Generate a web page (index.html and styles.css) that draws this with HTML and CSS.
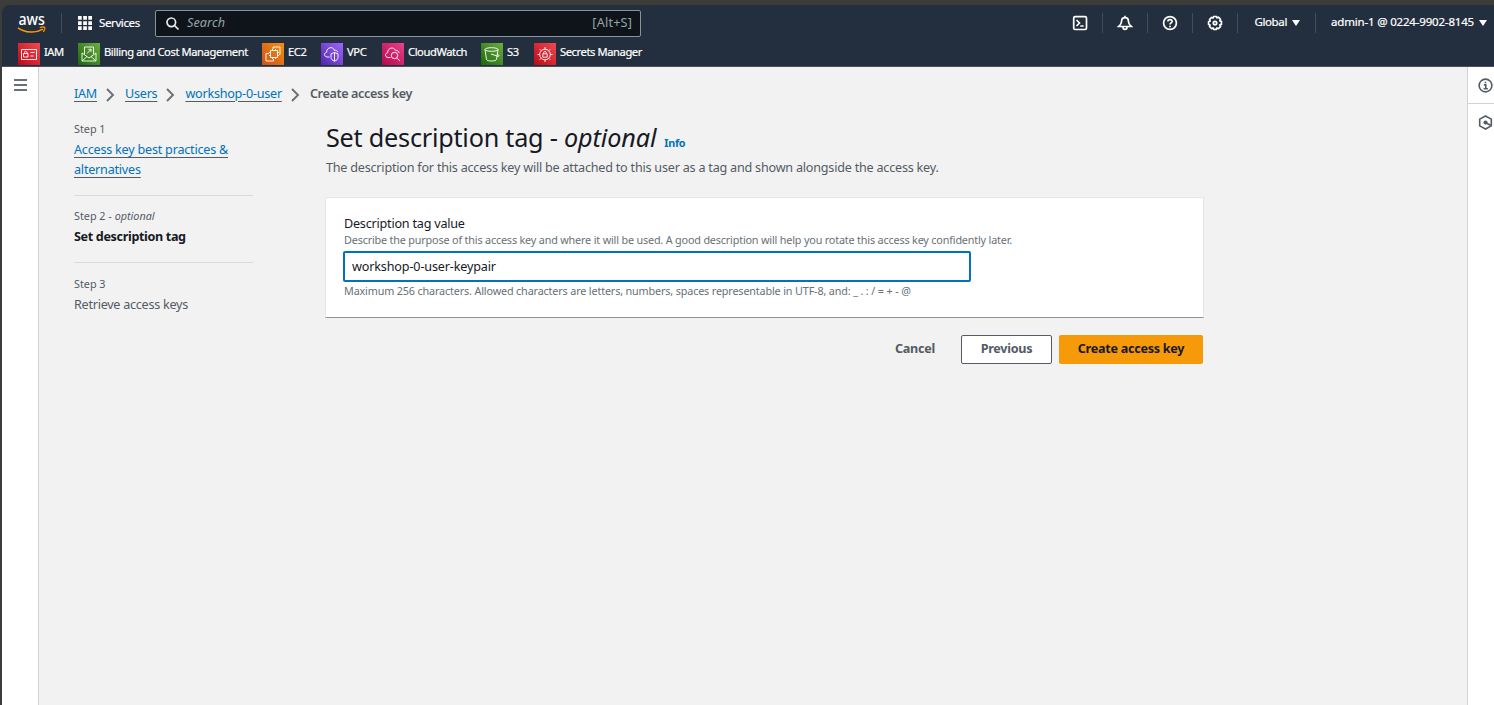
FILE: index.html
```
<!DOCTYPE html>
<html lang="en">
<head>
<meta charset="utf-8">
<title>Create access key | IAM</title>
<link rel="stylesheet" href="styles.css">
</head>
<body>
<div class="window">
  <header class="nav">
    <div class="nav-top">
      <svg class="aws" viewBox="0 -6 30 28" width="30" height="28">
        <text x="1.500" y="12" class="aws-word" textLength="26.500" lengthAdjust="spacingAndGlyphs">aws</text>
        <path d="M1 14.800C8 20 19 20.300 26 16.200" fill="none" stroke="#f90" stroke-width="1.500"/>
        <path d="M22.800 14.600c2-.7 4.600-.7 5 0s-.4 3-1.700 4.300" fill="none" stroke="#f90" stroke-width="1.200"/>
      </svg>
      <i class="sep sep-logo"></i>
      <svg class="grid" viewBox="0 0 14 14" width="14" height="14" fill="#fff"><path d="M0 0h3.700v3.700H0zM5.200 0h3.700v3.700H5.200zM10.300 0H14v3.700h-3.700zM0 5.200h3.700v3.700H0zM5.200 5.200h3.700v3.700H5.200zM10.300 5.200H14v3.700h-3.700zM0 10.300h3.700V14H0zM5.200 10.300h3.700V14H5.200zM10.300 10.300H14V14h-3.700z"/></svg>
      <span class="services">Services</span>
      <div class="search">
        <svg viewBox="0 0 14 14" width="14" height="14" fill="none" stroke="#e9ebed" stroke-width="1.700"><circle cx="5.300" cy="5.300" r="4.300"/><path d="M8.500 8.500l4 4"/></svg>
        <span class="placeholder">Search</span><span class="shortcut">[Alt+S]</span>
      </div>
      <div class="tools">
        <svg class="tool" viewBox="0 0 16 16" width="16" height="16"><rect x="1.700" y="1.700" width="12.800" height="12.800" rx="1.500"/><path d="M4.500 5l3 3-3 3M8.300 11h3.300"/></svg>
        <i class="sep"></i>
        <svg class="tool" viewBox="0 0 16 16" width="16" height="16"><path d="M8 .8v2M8 2.600c-2.200 0-3.400 1.600-3.400 3.600 0 2.200-.7 3.400-2.900 5.300h12.600c-2.200-1.900-2.900-3.100-2.900-5.300 0-2-1.200-3.600-3.400-3.600zM6 12c0 3.200 4 3.200 4 0"/></svg>
        <i class="sep"></i>
        <svg class="tool" viewBox="0 0 16 16" width="16" height="16"><circle cx="8" cy="8" r="6.400"/><path d="M5.900 6.600c0-2.700 4.200-2.600 4.200-.2C10.100 7.900 8 7.800 8 9.500M8 10.700v1.500"/></svg>
        <i class="sep"></i>
        <svg class="tool" viewBox="0 0 16 16" width="16" height="16"><path d="M6.700 1.500h2.600l.6 1.300 1.600-.5 1.900 1.900-.5 1.500 1.500.7v3l-1.500.6.6 1.600-1.900 1.900-1.600-.5-.7 1.400H6.700L6 13l-1.500.5-1.900-1.900.5-1.500-1.500-.7V6.700L3.100 6l-.5-1.600 1.900-1.900 1.500.5z"/><circle cx="8" cy="8" r="1.700"/></svg>
        <i class="sep"></i>
        <span class="region">Global</span><i class="caret"></i>
        <i class="sep"></i>
        <span class="account">admin-1 @ 0224-9902-8145</span><i class="caret"></i>
      </div>
    </div>
    <div class="favorites">
      <a class="fav fav-iam"><svg class="red" viewBox="0 0 22 22"><path d="M3.500 6.500h15v10h-15zM5.500 10.500h4.500v3.500H5.500zM6.500 10.500V9.300c0-1.500 2.500-1.500 2.500 0v1.200M12.500 9.500h4M12.500 13h3"/></svg><span>IAM</span></a>
      <a class="fav fav-bill"><svg class="green" viewBox="0 0 22 22"><path d="M4 10v8h14v-8l-7 5zM4 18l5-4.500M18 18l-5-4.500M6.500 11V4h9v7M9 10.500L13 6.500M10.500 6.300H13v2.500"/></svg><span>Billing and Cost Management</span></a>
      <a class="fav fav-ec2"><svg class="orange" viewBox="0 0 22 22"><path d="M8.500 7.500h7v7h-7zM7 10.500H4V18h7.500v-2M11 6V4h7v7.500h-1M10.500 6v1.500M13.500 6v1.500M10.500 14.500V16M13.500 14.500V16M7 9.500h1.500M7 12.500h1.500M15.500 9.500H17M15.500 12.500H17"/></svg><span>EC2</span></a>
      <a class="fav fav-vpc"><svg class="purple" viewBox="0 0 22 22"><path d="M8.500 14H6c-3.500-.5-3-4.500-.3-4.800C5.500 4 12.500 3 13.500 7.500c1.500-.8 3 .2 3 1.700M13.500 9.500l3.500 1.300v3.500c0 2-1.500 3.200-3.500 3.900-2-.7-3.500-1.900-3.500-3.900v-3.500zM13.500 9.500v8.700"/></svg><span>VPC</span></a>
      <a class="fav fav-cw"><svg class="pink" viewBox="0 0 22 22"><path d="M8.500 14.500H6c-3.500-.5-3-4.500-.3-4.800C5.500 4.500 12 3.500 13.500 7.500c2-.5 3.500.7 3.500 2.500"/><circle cx="12.500" cy="12.500" r="3.200"/><path d="M14.800 14.800l3 3"/></svg><span>CloudWatch</span></a>
      <a class="fav fav-s3"><svg class="green" viewBox="0 0 22 22"><ellipse cx="10.500" cy="6.500" rx="6.500" ry="1.800"/><path d="M4 6.500L5.500 16.500c.5 2 9.500 2 10 0L17 6.500M10 11l7 2.300c2 .3 1-1.700-.8-2.300"/></svg><span>S3</span></a>
      <a class="fav"><svg class="red" viewBox="0 0 22 22"><circle cx="11" cy="11.500" r="5.300"/><path d="M8.800 10.800h4.400v3.400H8.800zM9.700 10.800V9.500c0-1.500 2.600-1.500 2.600 0v1.300M11 4v2.200M11 16.800V19M3.500 11.500h2.200M16.300 11.500h2.200M5.700 6.200l1.500 1.500M16.300 6.200l-1.500 1.500M5.700 16.800l1.500-1.500M16.300 16.800l-1.500-1.500"/></svg><span>Secrets Manager</span></a>
    </div>
  </header>
  <div class="shell">
    <aside class="rail-left"><i class="burger"></i></aside>
    <div class="content">
      <nav class="crumbs">
        <a class="link">IAM</a><svg class="chev" viewBox="0 0 9 14"><path d="M1 1l6 6-6 6"/></svg>
        <a class="link">Users</a><svg class="chev" viewBox="0 0 9 14"><path d="M1 1l6 6-6 6"/></svg>
        <a class="link">workshop-0-user</a><svg class="chev" viewBox="0 0 9 14"><path d="M1 1l6 6-6 6"/></svg>
        <span class="current">Create access key</span>
      </nav>
      <div class="columns">
        <ol class="steps">
          <li><small>Step 1</small><div class="step-name"><a class="link wrap">Access key best practices &amp; alternatives</a></div></li>
          <li><small>Step 2 - <em>optional</em></small><div class="step-name active">Set description tag</div></li>
          <li><small>Step 3</small><div class="step-name">Retrieve access keys</div></li>
        </ol>
        <main class="main">
          <h1><span class="title">Set description tag - </span><em>optional</em><a class="info">Info</a></h1>
          <p class="lead">The description for this access key will be attached to this user as a tag and shown alongside the access key.</p>
          <section class="card">
            <label>Description tag value</label>
            <p class="hint">Describe the purpose of this access key and where it will be used. A good description will help you rotate this access key confidently later.</p>
            <div class="input">workshop-0-user-keypair</div>
            <p class="hint constraint">Maximum 256 characters. Allowed characters are letters, numbers, spaces representable in UTF-8, and: _ . : / = + - @</p>
          </section>
          <div class="actions"><span class="btn text">Cancel</span><span class="btn outline">Previous</span><span class="btn primary">Create access key</span></div>
        </main>
      </div>
    </div>
    <aside class="rail-right">
      <div class="rail-item"><svg viewBox="0 0 16 16" width="15" height="15"><circle cx="8" cy="8" r="6.800"/><path d="M6.300 7.300H8.300v4M6 11.500h4.500M8 4v1.700"/></svg></div>
      <div class="rail-item"><svg viewBox="0 0 16 16" width="15" height="15"><path d="M8 1l6.200 3.400v7.200L8 15l-6.200-3.400V4.400z"/><circle cx="8" cy="8" r="1.400" fill="#545b64"/><path d="M8.500 8.500l5 2.500"/></svg></div>
    </aside>
  </div>
</div>
</body>
</html>
```
FILE: styles.css
```
* { box-sizing: border-box; }
body { margin: 0; width: 1494px; height: 705px; overflow: hidden; background: #3c3c3a; font-family: "Noto Sans", "Open Sans", sans-serif; font-size: 12.6px; letter-spacing: -.215px; color: #16191f; }
p, h1, ol { margin: 0; padding: 0; }
i { display: block; }
a { white-space: nowrap; }
.window { display: flex; flex-direction: column; height: 705px; padding: 5px 0 0 2px; }
.nav { height: 62px; background: #232f3e; border-radius: 8px 0 0 0; border-bottom: 1px solid #4b4f59; color: #fff; font-size: 11.5px; flex: none; -webkit-text-stroke: .2px; }
.nav-top { display: flex; align-items: center; height: 36px; padding: 0 7px 0 15px; white-space: nowrap; }
.nav-top > * { flex: none; }
.aws { margin-top: -5px; }
.aws-word { font: 500 15.5px "Noto Sans", sans-serif; letter-spacing: 0; fill: #fff; -webkit-text-stroke: 0; }
.sep { width: 1px; height: 20px; background: #414d5c; }
.sep-logo { margin: 0 16px 0 14px; }
.services { width: 56px; margin: -2px 0 0 7px; letter-spacing: -.38px; }
.search { display: flex; align-items: center; width: 486px; height: 27px; padding: 0 8px 0 10px; background: #0f141a; border: 1px solid #879596; border-radius: 2px; font-size: 12.6px; color: #95a5a6; margin-top: 1px; letter-spacing: 0; -webkit-text-stroke: 0; }
.placeholder { margin: -2px 0 0 7px; font-style: italic; letter-spacing: .1px; }
.shortcut { margin: -2px 0 0 auto; letter-spacing: .2px; }
.tools { display: flex; align-items: center; margin-left: auto; }
.tool { fill: none; stroke: #fff; stroke-width: 1.7; }
.tools .sep { margin: 0 14px; }
.tools .caret + .sep { margin: 0 15px; }
.region, .account { margin-top: -3px; }
.region { letter-spacing: -.36px; margin-left: 2px; }
.account { letter-spacing: -.18px; }
.caret { border: 4px solid transparent; border-top: 6px solid #fff; border-bottom: 0; margin-left: 5px; }
.favorites { display: flex; height: 25px; padding: 2px 0 0 16px; }
.fav { display: flex; gap: 4px; line-height: 17px; font-size: 11.2px; letter-spacing: -.42px; }
.fav svg { width: 22px; height: 22px; fill: none; stroke: #fff; stroke-width: .9; flex: none; }
.red { background: linear-gradient(45deg, #bd0816, #f04a52); }
.green { background: linear-gradient(45deg, #1b660f, #6cae3e); }
.orange { background: linear-gradient(45deg, #c8511b, #f49111); }
.purple { background: linear-gradient(45deg, #4d27a8, #a166ff); }
.pink { background: linear-gradient(45deg, #b0084d, #f0408b); }
.fav-iam { width: 60px; }
.fav-bill { width: 184px; }
.fav-ec2 { width: 59px; }
.fav-vpc { width: 61px; }
.fav-cw { width: 99px; }
.fav-s3 { width: 53px; }
.shell { display: flex; flex: 1; background: #f2f2f2; }
.rail-left { width: 37px; background: #fff; border-right: 1px solid #d0d4d8; padding: 12px 0 0 12px; }
.burger { width: 13px; height: 12px; border-top: 2px solid #687078; border-bottom: 2px solid #687078; background: linear-gradient(#687078, #687078) 0 50% / 100% 2px no-repeat; }
.content { flex: 1; padding: 16px 0 0 35px; }
.crumbs { display: flex; align-items: center; height: 20px; white-space: nowrap; }
.link { color: #0073bb; text-decoration: underline #545b64 1px; text-underline-offset: 3px; }
.crumbs .link { letter-spacing: -.24px; }
.chev { width: 9px; height: 14px; margin: 3px 10px 0 9px; fill: none; stroke: #687078; stroke-width: 1.9; }
.current { color: #545b64; font-weight: 600; letter-spacing: -.36px; }
.columns { display: flex; padding-top: 17px; }
.steps { list-style: none; width: 179px; color: #545b64; }
.steps li { height: 67px; border-bottom: 1px solid #d5dbdb; }
.steps li:first-child { height: 76px; }
.steps li + li { padding-top: 11px; }
.steps li:last-child { border: 0; padding-top: 12px; }
.steps li:last-child .step-name { letter-spacing: -.26px; }
.steps small { display: block; font-size: 10.8px; line-height: 18px; letter-spacing: 0; }
.step-name { line-height: 20px; padding-top: 2px; white-space: nowrap; }
.wrap { white-space: normal; }
.active { font-weight: 700; letter-spacing: -.35px; color: #16191f; }
.main { width: 877px; margin-left: 73px; }
h1 { font-size: 25.2px; font-weight: 400; line-height: 36px; margin-top: -1px; letter-spacing: -.1px; white-space: pre; }
.title { letter-spacing: -.22px; }
.info { font-size: 10.8px; font-weight: 700; letter-spacing: -.3px; color: #0073bb; margin-left: 8px; }
.lead { line-height: 20px; margin-top: -3px; color: #545b64; white-space: nowrap; }
.card { width: 879px; height: 121px; margin: 19px 0 0 -1px; padding: 17px 18px 16px; background: #fff; border: 1px solid #e4e6e7; border-bottom-color: #8d9294; white-space: nowrap; }
.card label { display: block; line-height: 18px; }
.hint { font-size: 10.8px; line-height: 16px; margin-top: -1px; letter-spacing: -.17px; color: #687078; }
.constraint { margin: 0; letter-spacing: -.15px; }
.input { width: 628px; height: 31px; margin: 3px 0 1px -1px; border: 2px solid #0073bb; border-radius: 2px; padding-left: 7px; line-height: 27px; letter-spacing: -.15px; }
.actions { display: flex; justify-content: flex-end; margin-top: 17px; font-weight: 700; letter-spacing: -.27px; color: #545b64; text-align: center; white-space: nowrap; }
.btn { height: 29px; line-height: 27px; border-radius: 2px; }
.text { margin-right: 26px; }
.outline { width: 91px; margin-right: 7px; border: 1px solid #545b64; background: #fff; line-height: 25px; }
.primary { width: 144px; background: #f79a0a; color: #16191f; }
.rail-right { width: 27px; background: #fff; border-left: 1px solid #d0d4d8; }
.rail-item { height: 37px; padding: 11px 0 0 10px; border-bottom: 1px solid #d0d4d8; }
.rail-item:last-child { border: 0; }
.rail-item svg { display: block; fill: none; stroke: #545b64; stroke-width: 1.7; }
```
